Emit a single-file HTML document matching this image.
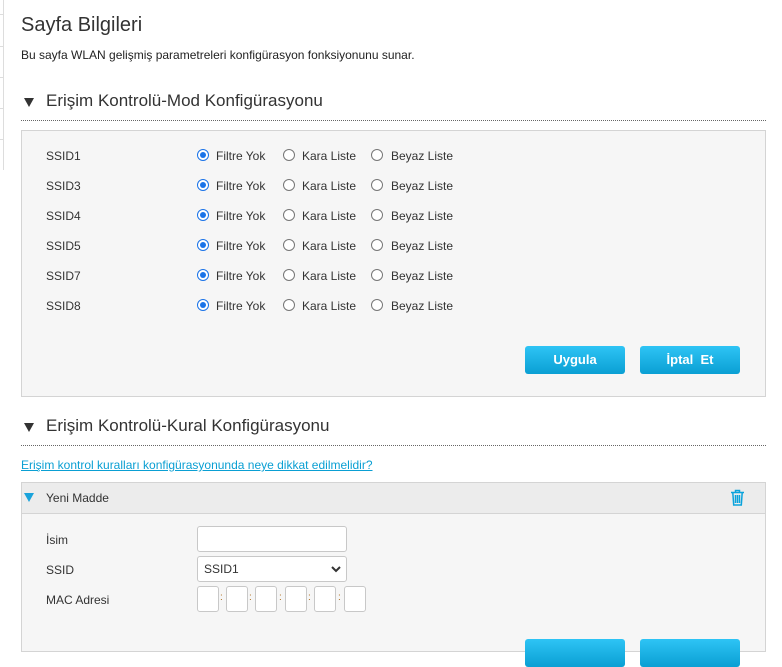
<!DOCTYPE html>
<html><head><meta charset="utf-8"><style>
*{box-sizing:border-box;margin:0;padding:0}
body{width:782px;height:643px;overflow:hidden;background:#fff;font-family:"Liberation Sans",sans-serif;color:#333;position:relative;font-size:12px}
.a{position:absolute;white-space:nowrap}
.side{position:absolute;left:0;top:0;width:4px;height:170px;border-right:1px solid #ddd}
.side i{position:absolute;left:0;width:4px;border-top:1px solid #ddd}
.tri{position:absolute;width:0;height:0;border-left:5px solid transparent;border-right:5px solid transparent;border-top:9px solid #333}
.dot{position:absolute;left:21px;width:745px;border-top:1px dotted #666}
.panel{position:absolute;left:21px;width:745px;background:#f6f6f6;border:1px solid #d4d4d4}
.r{position:absolute;width:12px;height:12px;border-radius:50%;border:1px solid #777;background:#fff}
.r.on{border:1px solid #1a73e8;background:#fff}
.r.on:after{content:"";position:absolute;left:2px;top:2px;width:6px;height:6px;border-radius:50%;background:#1a73e8}
.btn{position:absolute;width:100px;height:28px;border-radius:3px;background:linear-gradient(#2ec4f5,#0a9fd3);color:#fff;font-size:13px;font-weight:bold;text-align:center;line-height:28px}
.in{position:absolute;background:#fff;border:1px solid #c8c8c8;border-radius:3px}
.c{position:absolute;font-size:10px;color:#b07020}
</style></head><body>
<div class="side"><i style="top:14px"></i><i style="top:46px"></i><i style="top:77px"></i><i style="top:108px"></i><i style="top:139px"></i></div>
<div class="a" style="left:21px;top:14px;font-size:20px;color:#333">Sayfa Bilgileri</div>
<div class="a" style="left:21px;top:48px;font-size:12px;color:#222">Bu sayfa WLAN gelişmiş parametreleri konfigürasyon fonksiyonunu sunar.</div>
<div class="tri" style="left:24px;top:98px"></div>
<div class="a" style="left:46px;top:91px;font-size:17px;color:#333">Erişim Kontrolü-Mod Konfigürasyonu</div>
<div class="dot" style="top:120px"></div>
<div class="panel" style="top:130px;height:267px"></div>
<div id="rows"></div>
<div class="btn" style="left:525px;top:346px">Uygula</div>
<div class="btn" style="left:640px;top:346px">İptal &nbsp;Et</div>
<div class="tri" style="left:24px;top:423px"></div>
<div class="a" style="left:46px;top:416px;font-size:17px;color:#333">Erişim Kontrolü-Kural Konfigürasyonu</div>
<div class="dot" style="top:445px"></div>
<div class="a" style="left:21px;top:458px;font-size:12px;color:#0a9fd3;text-decoration:underline">Erişim kontrol kuralları konfigürasyonunda neye dikkat edilmelidir?</div>
<div class="panel" style="top:482px;height:170px"></div>
<div style="position:absolute;left:22px;top:483px;width:743px;height:31px;background:#ececec;border-bottom:1px solid #d4d4d4"></div>
<div style="position:absolute;left:24px;top:493px;width:0;height:0;border-left:5px solid transparent;border-right:5px solid transparent;border-top:9px solid #1aa3db"></div>
<div class="a" style="left:46px;top:491px;font-size:12px">Yeni Madde</div>
<svg class="a" style="left:730px;top:489px" width="15" height="17" viewBox="0 0 15 17"><g fill="none" stroke="#0aa3dc" stroke-width="1.5"><path d="M1 3.5h13M5.5 3.5V1.5h4v2M2.8 3.5l0.9 12.5h7.6l0.9-12.5M5.5 6v8M7.5 6v8M9.5 6v8"/></g></svg>
<div class="a" style="left:46px;top:533px">İsim</div>
<div class="a" style="left:46px;top:563px">SSID</div>
<div class="a" style="left:46px;top:593px">MAC Adresi</div>
<div class="in" style="left:197px;top:526px;width:150px;height:26px"></div>
<div class="in" style="left:197px;top:556px;width:150px;height:26px"><span class="a" style="left:6px;top:5px;font-size:12px">SSID1</span><svg class="a" style="left:133px;top:9px" width="10" height="7"><path d="M1 1l4 4 4-4" fill="none" stroke="#333" stroke-width="2"/></svg></div>
<div class="in" style="left:197px;top:586px;width:22px;height:26px"></div><span class="c" style="left:220px;top:592px">:</span>
<div class="in" style="left:226px;top:586px;width:22px;height:26px"></div><span class="c" style="left:249px;top:592px">:</span>
<div class="in" style="left:255px;top:586px;width:22px;height:26px"></div><span class="c" style="left:279px;top:592px">:</span>
<div class="in" style="left:285px;top:586px;width:22px;height:26px"></div><span class="c" style="left:308px;top:592px">:</span>
<div class="in" style="left:314px;top:586px;width:22px;height:26px"></div><span class="c" style="left:338px;top:592px">:</span>
<div class="in" style="left:344px;top:586px;width:22px;height:26px"></div>
<div class="btn" style="left:525px;top:639px"></div>
<div class="btn" style="left:640px;top:639px"></div>
<script>
var h='',n=['SSID1','SSID3','SSID4','SSID5','SSID7','SSID8'];
n.forEach(function(s,i){var y=149+i*30;
h+='<div class="a" style="left:46px;top:'+y+'px">'+s+'</div>'+
'<div class="r on" style="left:197px;top:'+y+'px"></div><div class="a" style="left:216px;top:'+y+'px">Filtre Yok</div>'+
'<div class="r" style="left:283px;top:'+y+'px"></div><div class="a" style="left:302px;top:'+y+'px">Kara Liste</div>'+
'<div class="r" style="left:371px;top:'+y+'px"></div><div class="a" style="left:391px;top:'+y+'px">Beyaz Liste</div>';});
document.getElementById('rows').innerHTML=h;
</script>
</body></html>
